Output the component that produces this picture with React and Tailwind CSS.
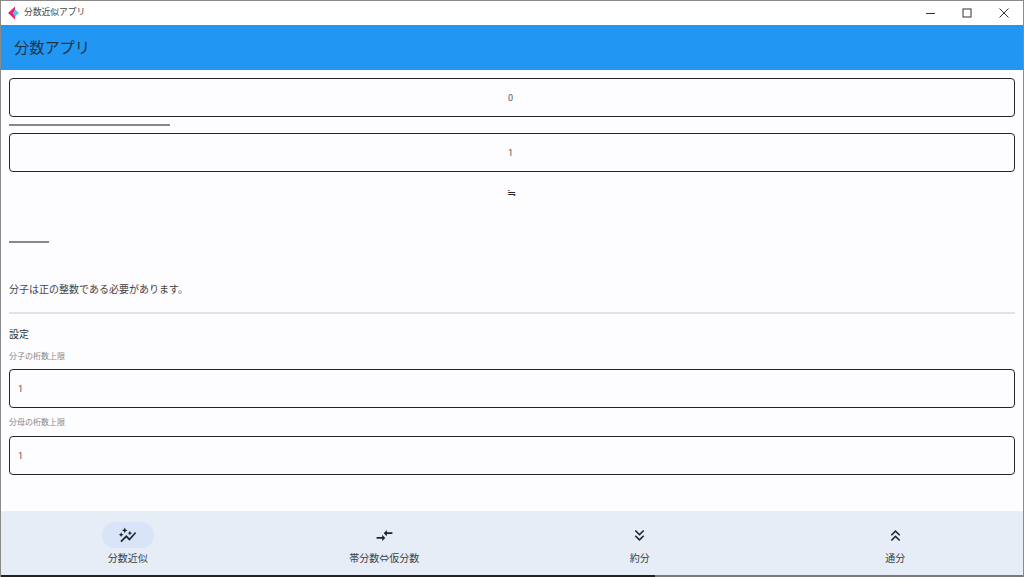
import React from "react";

const fontStack = "font-['Roboto','Noto_Sans_CJK_JP',sans-serif]";

const navItems = [
  {
    label: "分数近似",
    active: true,
    icon: "M14.06 9.94L12 9l2.06-.94L15 6l.94 2.06L18 9l-2.06.94L15 12zM4 14l.94-2.06L7 11l-2.06-.94L4 8l-.94 2.06L1 11l2.06.94zm4.5-5l1.09-2.41L12 5.5l-2.41-1.09L8.5 2 7.41 4.41 5 5.5l2.41 1.09zm-4 11.5l6-6.01 4 4L23 8.93l-1.41-1.41-7.09 7.97-4-4L3 19z",
  },
  {
    label: "帯分数⇔仮分数",
    icon: "M9.01 14H2v2h7.01v3L13 15l-3.99-4v3zm5.98-1v-3H22V8h-7.01V5L11 9l3.99 4z",
  },
  {
    label: "約分",
    icon: "M18 6.41L16.59 5 12 9.58 7.41 5 6 6.41l6 6zM18 13l-1.41-1.41L12 16.17l-4.59-4.58L6 13l6 6z",
  },
  {
    label: "通分",
    icon: "M6 17.59L7.41 19 12 14.42 16.59 19 18 17.59l-6-6zM6 11l1.41 1.41L12 7.83l4.59 4.58L18 11l-6-6z",
  },
];

const Field = ({ value, center }) => (
  <div
    className={`h-[39px] flex items-center rounded-[4px] border border-[#26252a] text-[9px] text-[#555] pt-[2px] ${
      center ? "justify-center pr-[3px]" : "pl-[8px]"
    }`}
  >
    {value}
  </div>
);

const App = () => {
  return (
    <div
      className={`w-[1024px] h-[577px] overflow-hidden flex flex-col bg-[#fdfcff] border-l border-t border-r border-[#8a8a8a] ${fontStack}`}
    >
      <div className="h-[24px] shrink-0 bg-white flex items-center">
        <svg width="16" height="16" viewBox="0 0 16 16" className="ml-[4px]">
          <path d="M10 1.5 L3 8 L10 14.5 L10 10.5 L8 8 L10 5.5 Z" fill="#f0246e" />
          <path d="M10 4.5 L8 8 L10 11.5 L14 8 Z" fill="#4fc3f7" />
        </svg>
        <span className="ml-[3px] text-[8.75px] text-[#444]">分数近似アプリ</span>
        <div className="ml-auto flex items-center">
          <div className="w-[36px] flex justify-center">
            <svg width="10" height="10" viewBox="0 0 10 10">
              <path d="M0 5.5 H9" stroke="#333" strokeWidth="1" />
            </svg>
          </div>
          <div className="w-[36px] flex justify-center">
            <svg width="10" height="10" viewBox="0 0 10 10">
              <rect x="1" y="1" width="8" height="8" fill="none" stroke="#333" strokeWidth="1" />
            </svg>
          </div>
          <div className="w-[38px] flex justify-center">
            <svg width="10" height="10" viewBox="0 0 10 10">
              <path d="M0.5 0.5 L9.5 9.5 M9.5 0.5 L0.5 9.5" stroke="#333" strokeWidth="1" />
            </svg>
          </div>
        </div>
      </div>

      <div className="h-[45px] shrink-0 bg-[#2196f3] flex items-center pl-[13px] pt-[2px] text-[15.2px] text-[#1f3145]">
        分数アプリ
      </div>

      <div className="flex-1 px-[8px] pt-[8px] text-[#333]">
        <Field value="0" center />
        <div className="mt-[7px] h-[2px] w-[161px] bg-[#888]" />
        <div className="mt-[7px]">
          <Field value="1" center />
        </div>
        <div className="mt-[14px] h-[16px] flex items-center justify-center pr-[1px] text-[11px] text-[#222]">≒</div>
        <div className="mt-[39px] h-[2px] w-[40px] bg-[#888]" />
        <p className="mt-[39px] h-[16px] leading-[16px] text-[10px] text-[#444]">分子は正の整数である必要があります。</p>
        <div className="mt-[14px] h-[2px] bg-[#e2e2e2]" />
        <p className="mt-[13px] h-[16px] leading-[16px] text-[10px] text-[#333]">設定</p>
        <p className="mt-[8px] h-[12px] leading-[12px] text-[8px] text-[#888]">分子の桁数上限</p>
        <div className="mt-[6px]">
          <Field value="1" />
        </div>
        <p className="mt-[9px] h-[12px] leading-[12px] text-[8px] text-[#888]">分母の桁数上限</p>
        <div className="mt-[7px]">
          <Field value="1" />
        </div>
      </div>

      <div className="h-[64px] shrink-0 bg-[#e7edf6] grid grid-cols-4">
        {navItems.map((item) => (
          <div
            key={item.label}
            className={`flex flex-col items-center pt-[11px] ${item.active ? "pr-[2px]" : ""}`}
          >
            <div
              className={`w-[52px] h-[26px] rounded-full flex items-center justify-center ${
                item.active ? "bg-[#d8e4f7]" : ""
              }`}
            >
              <svg width="19" height="19" viewBox="0 0 24 24" fill="#1c2430">
                <path d={item.icon} />
              </svg>
            </div>
            <span className="mt-[4px] text-[10px] leading-[14px] text-[#3a3f47]">{item.label}</span>
          </div>
        ))}
      </div>
      <div className="h-[2px] shrink-0 flex">
        <div className="w-[654px] bg-[#222]" />
        <div className="flex-1 bg-[#7a7a7a]" />
      </div>
    </div>
  );
};

export default App;
